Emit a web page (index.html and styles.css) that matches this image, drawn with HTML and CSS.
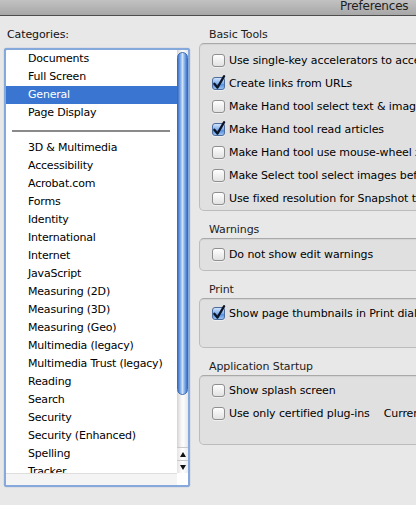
FILE: index.html
```html
<!DOCTYPE html>
<html>
<head>
<meta charset="utf-8">
<link rel="stylesheet" href="styles.css">
</head>
<body>
<div class="titlebar"><span class="title">Preferences</span></div>
<div class="main">
  <div class="sidebar">
    <div class="cat-label">Categories:</div>
    <div class="list">
      <div class="list-body">
        <div class="items">
          <div class="item">Documents</div>
          <div class="item">Full Screen</div>
          <div class="item selected">General</div>
          <div class="item">Page Display</div>
          <div class="sep"><div class="sep-line"></div></div>
          <div class="item">3D &amp; Multimedia</div>
          <div class="item">Accessibility</div>
          <div class="item">Acrobat.com</div>
          <div class="item">Forms</div>
          <div class="item">Identity</div>
          <div class="item">International</div>
          <div class="item">Internet</div>
          <div class="item">JavaScript</div>
          <div class="item">Measuring (2D)</div>
          <div class="item">Measuring (3D)</div>
          <div class="item">Measuring (Geo)</div>
          <div class="item">Multimedia (legacy)</div>
          <div class="item">Multimedia Trust (legacy)</div>
          <div class="item">Reading</div>
          <div class="item">Search</div>
          <div class="item">Security</div>
          <div class="item">Security (Enhanced)</div>
          <div class="item">Spelling</div>
          <div class="item">Tracker</div>
          <div class="item">Trust Manager</div>
          <div class="item">Units</div>
        </div>
        <div class="scroll">
          <div class="thumb"></div>
          <div class="track"></div>
          <div class="arrow up"><span class="tri-up"></span></div>
          <div class="arrow down"><span class="tri-down"></span></div>
        </div>
      </div>
      <div class="list-foot"><div class="foot-left"></div><div class="foot-right"></div></div>
    </div>
  </div>

  <div class="content">
    <div class="group-label">Basic Tools</div>
    <div class="box box-basic">
      <div class="row"><span class="cb"></span>Use single-key accelerators to access tools</div>
      <div class="row"><span class="cb on"><svg viewBox="0 0 12 12"><path d="M2.2 6.2 L5 9.8 L11.2 -0.8" /></svg></span>Create links from URLs</div>
      <div class="row"><span class="cb"></span>Make Hand tool select text &amp; images</div>
      <div class="row"><span class="cb on"><svg viewBox="0 0 12 12"><path d="M2.2 6.2 L5 9.8 L11.2 -0.8" /></svg></span>Make Hand tool read articles</div>
      <div class="row"><span class="cb"></span>Make Hand tool use mouse-wheel zooming</div>
      <div class="row"><span class="cb"></span>Make Select tool select images before text</div>
      <div class="row"><span class="cb"></span>Use fixed resolution for Snapshot tool images</div>
    </div>

    <div class="group-label">Warnings</div>
    <div class="box box-warn">
      <div class="row"><span class="cb"></span>Do not show edit warnings</div>
    </div>

    <div class="group-label">Print</div>
    <div class="box box-print">
      <div class="row"><span class="cb on"><svg viewBox="0 0 12 12"><path d="M2.2 6.2 L5 9.8 L11.2 -0.8" /></svg></span>Show page thumbnails in Print dialog</div>
    </div>

    <div class="group-label">Application Startup</div>
    <div class="box box-app">
      <div class="row"><span class="cb"></span>Show splash screen</div>
      <div class="row"><span class="cb"></span>Use only certified plug-ins<span class="current">Currently in Certified Mode: No</span></div>
    </div>
  </div>
</div>
</body>
</html>
```

FILE: styles.css
```css
html, body {
  margin: 0;
  padding: 0;
}
body {
  width: 416px;
  height: 505px;
  overflow: hidden;
  background: #e8e8e8;
  font-family: "DejaVu Sans", "Liberation Sans", sans-serif;
  font-size: 11px;
  color: #111;
}

.titlebar {
  height: 15px;
  border-bottom: 1px solid #4d4d4d;
  background: linear-gradient(#c2c2c2, #a7a7a7);
  white-space: nowrap;
  overflow: hidden;
}
.title {
  display: block;
  padding-left: 340px;
  font-size: 12px;
  letter-spacing: -0.2px;
  line-height: 12px;
  color: #1e1e1e;
}

.main {
  display: flex;
  padding-top: 12px;
}

.sidebar {
  width: 186px;
  margin-left: 4px;
  flex: none;
}
.cat-label {
  padding-left: 3px;
  line-height: 14px;
  color: #111;
  letter-spacing: -0.1px;
}
.list {
  margin-top: 6px;
  border: 2px solid #86a9dc;
  border-radius: 3px;
  background: #fff;
  box-shadow: 0 0 1px #5f86c0;
}
.list-body {
  display: flex;
  height: 423px;
}
.items {
  flex: 1;
  overflow: hidden;
}
.item {
  height: 18px;
  line-height: 17px;
  padding-left: 22px;
  white-space: nowrap;
  color: #000;
  letter-spacing: -0.2px;
}
.item.selected {
  background: #3a76d1;
  color: #fff;
}
.sep {
  height: 17px;
  display: flex;
  align-items: center;
}
.sep-line {
  margin-left: 6px;
  width: 158px;
  height: 2px;
  background: #8a8a8a;
}

.scroll {
  width: 11px;
  flex: none;
  display: flex;
  flex-direction: column;
  background: linear-gradient(to right, #d4d4d4, #f7f7f7 40%, #fbfbfb 60%, #e6e6e6);
}
.thumb {
  margin-top: 2px;
  height: 343px;
  border-radius: 6px;
  box-sizing: border-box;
  border: 1px solid #3d6cb5;
  background: linear-gradient(to right, #3f73c4, #86b0ea 28%, #cfe2fa 50%, #86b0ea 72%, #3f73c4);
}
.track {
  flex: 1;
}
.arrow {
  height: 13px;
  display: flex;
  align-items: center;
  justify-content: center;
  background: linear-gradient(to right, #e4e4e4, #ffffff 50%, #ececec);
  border-top: 1px solid #c9c9c9;
  box-sizing: border-box;
}
.tri-up {
  width: 0;
  height: 0;
  border-left: 3px solid transparent;
  border-right: 3px solid transparent;
  border-bottom: 5px solid #111;
}
.tri-down {
  width: 0;
  height: 0;
  border-left: 3px solid transparent;
  border-right: 3px solid transparent;
  border-top: 5px solid #111;
}
.list-foot {
  display: flex;
  height: 12px;
}
.foot-left {
  flex: 1;
  background: #f4f4f4;
  border-top: 1px solid #dedede;
}
.foot-right {
  width: 11px;
  background: #fff;
}

.content {
  width: 250px;
  flex: none;
  margin-left: 9px;
}
.group-label {
  padding-left: 10px;
  line-height: 14px;
  height: 15px;
  color: #1c1c1c;
  white-space: nowrap;
  letter-spacing: -0.1px;
}
.box {
  border: 1px solid #bcbcbc;
  border-top-color: #a9a9a9;
  border-radius: 5px;
  background: #e0e0e0;
  padding-left: 12px;
  margin-bottom: 12px;
  box-shadow: inset 0 1px 1px rgba(0,0,0,0.06);
}
.box-basic { padding-top: 5px; padding-bottom: 0; }
.box-warn { padding-top: 4px; padding-bottom: 4px; }
.box-print { padding-top: 3px; padding-bottom: 22px; }
.box-app { padding-top: 3px; padding-bottom: 19px; }

.row {
  display: flex;
  align-items: center;
  height: 23px;
  white-space: nowrap;
  color: #000;
  letter-spacing: -0.1px;
}
.cb {
  position: relative;
  flex: none;
  width: 13px;
  height: 13px;
  box-sizing: border-box;
  margin-right: 4px;
  border: 1px solid #8f8f8f;
  border-radius: 3px;
  background: linear-gradient(#fefefe, #e2e2e2);
  box-shadow: 0 1px 0 rgba(255,255,255,0.5);
}
.cb.on {
  border-color: #4b6c9c;
  background: linear-gradient(#cfe2fb, #80b0ec 50%, #5792e0 60%, #9cc3f1);
}
.cb svg {
  position: absolute;
  left: -1px;
  top: -1px;
  width: 13px;
  height: 13px;
  overflow: visible;
}
.cb svg path {
  fill: none;
  stroke: #0c1628;
  stroke-width: 2.1;
  stroke-linecap: round;
  stroke-linejoin: round;
}
.current {
  margin-left: 14px;
}
```
